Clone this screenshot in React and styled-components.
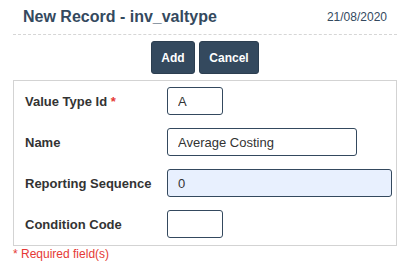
import styled, { createGlobalStyle } from "styled-components"

const Global = createGlobalStyle`
    body {
        margin: 0;
        background: #fff;
        font-family: "Liberation Sans", Arial, sans-serif;
    }
`

const Page = styled.div`
    width: 384px;
    padding: 0 10px 0 13px;
`

const Header = styled.div`
    display: flex;
    justify-content: space-between;
    align-items: center;
    height: 35px;
    padding: 0 10px;
    border-bottom: 1px dashed #d6d6d6;
    box-sizing: border-box;
`

const Title = styled.h1`
    margin: 0;
    font-size: 16px;
    font-weight: bold;
    color: #34495e;
`

const Date = styled.span`
    font-size: 12px;
    color: #34495e;
`

const Actions = styled.div`
    display: flex;
    justify-content: center;
    gap: 4px;
    padding: 6px 0 6px;
`

const Button = styled.button`
    width: ${props => props.wide ? "60px" : "44px"};
    height: 33px;
    padding: 0;
    font-family: "Liberation Sans", Arial, sans-serif;
    font-size: 12px;
    font-weight: bold;
    color: #fff;
    background-color: #34495e;
    border: 1px solid #2c3e50;
    border-radius: 3px;
`

const Form = styled.div`
    border: 1px solid #d3d3d3;
    padding: 6px 10px 7px 11px;
    display: flex;
    flex-direction: column;
    gap: 13px;
`

const Row = styled.div`
    display: grid;
    grid-template-columns: 142px 1fr;
    align-items: center;
`

const Label = styled.label`
    font-size: 13px;
    font-weight: bold;
    color: #333;
`

const Star = styled.span`
    color: #e53935;
`

const Input = styled.input`
    box-sizing: border-box;
    width: ${props => props.width}px;
    height: 28px;
    padding: 0 10px;
    font-family: "Liberation Sans", Arial, sans-serif;
    font-size: 13px;
    color: #333;
    background-color: ${props => props.filled ? "#e8f0fe" : "#fff"};
    border: 1px solid #34495e;
    border-radius: 3px;
    outline: none;
`

const Note = styled.div`
    font-size: 12px;
    color: #e53935;
    padding-top: 1px;
`

const App = () => {
    return (
        <Page>
            <Global />
            <Header>
                <Title>New Record - inv_valtype</Title>
                <Date>21/08/2020</Date>
            </Header>
            <Actions>
                <Button>Add</Button>
                <Button wide>Cancel</Button>
            </Actions>
            <Form>
                <Row>
                    <Label>Value Type Id <Star>*</Star></Label>
                    <Input width={56} defaultValue="A" />
                </Row>
                <Row>
                    <Label>Name</Label>
                    <Input width={190} defaultValue="Average Costing" />
                </Row>
                <Row>
                    <Label>Reporting Sequence</Label>
                    <Input width={225} filled defaultValue="0" />
                </Row>
                <Row>
                    <Label>Condition Code</Label>
                    <Input width={56} defaultValue="" />
                </Row>
            </Form>
            <Note>* Required field(s)</Note>
        </Page>
    )
}

export default App
